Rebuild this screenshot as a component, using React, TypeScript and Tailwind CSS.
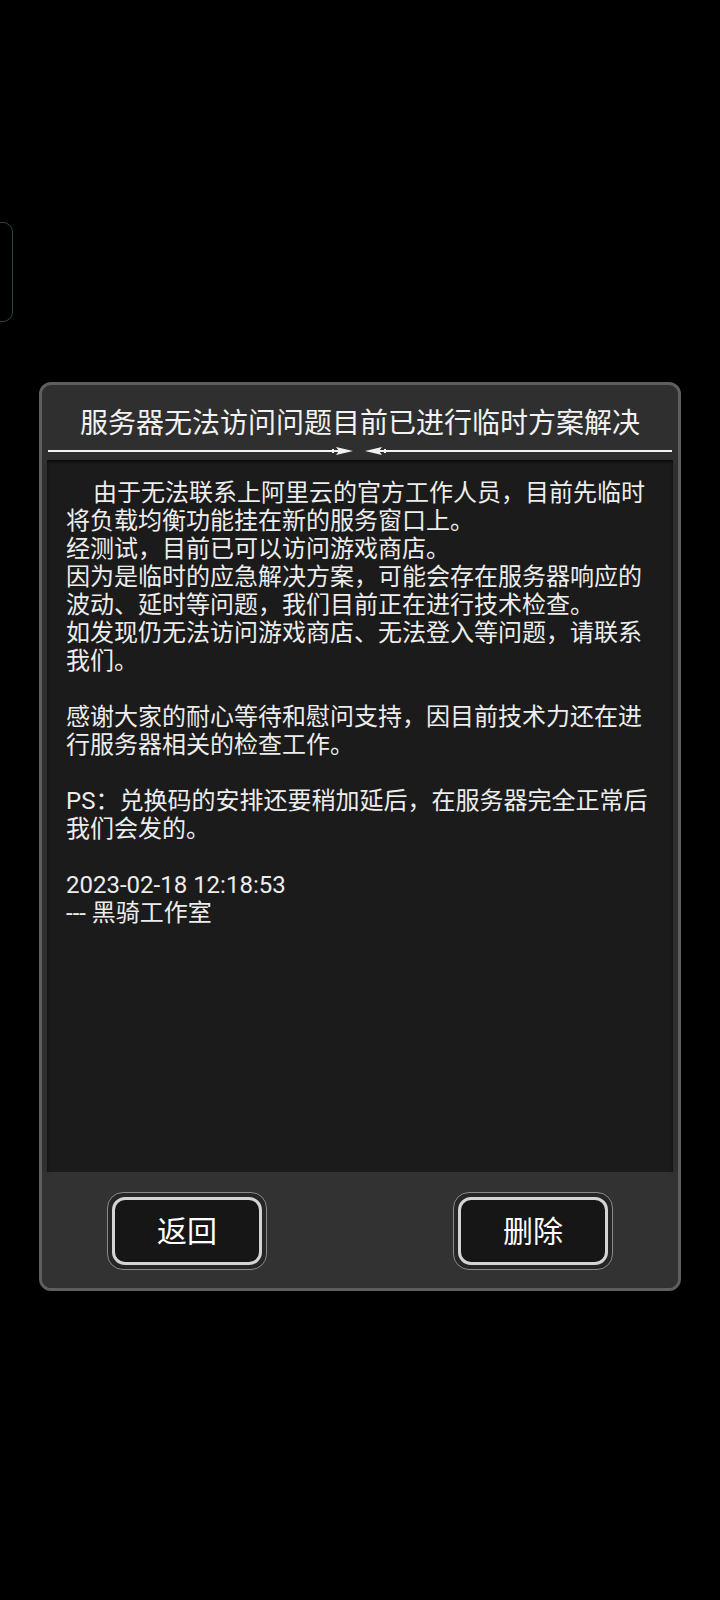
import React from 'react'

const lines: string[] = [
  '将负载均衡功能挂在新的服务窗口上。',
  '经测试，目前已可以访问游戏商店。',
  '因为是临时的应急解决方案，可能会存在服务器响应的',
  '波动、延时等问题，我们目前正在进行技术检查。',
  '如发现仍无法访问游戏商店、无法登入等问题，请联系',
  '我们。',
  '',
  '感谢大家的耐心等待和慰问支持，因目前技术力还在进',
  '行服务器相关的检查工作。',
  '',
  'PS：兑换码的安排还要稍加延后，在服务器完全正常后',
  '我们会发的。',
  '',
  '2023-02-18 12:18:53',
  '--- 黑骑工作室',
]

const font = { fontFamily: 'Roboto, "Noto Sans CJK SC", sans-serif' }

// divider under the title: two lines with arrowheads meeting in the middle
const Divider = () => (
  <svg width="624" height="12" viewBox="0 0 624 12" className="block">
    <rect x="0" y="5" width="294" height="2" fill="#f2f2f2" />
    <path d="M288 2 L305 6 L288 10 L291 6 Z" fill="#f2f2f2" />
    <rect x="284" y="4" width="2" height="4" fill="#f2f2f2" />
    <path d="M334 2 L317 6 L334 10 L331 6 Z" fill="#f2f2f2" />
    <rect x="336" y="4" width="2" height="4" fill="#f2f2f2" />
    <rect x="330" y="5" width="294" height="2" fill="#f2f2f2" />
  </svg>
)

const DialogButton = ({ label }: { label: string }) => (
  <button className="w-[160px] h-[78px] rounded-[16px] border border-[#8a8a8a] bg-[#262626] p-[4px]">
    <div className="w-full h-full rounded-[13px] border-[3px] border-[#d4d4d4] bg-[#161616] flex items-center justify-center text-[30px] text-white leading-none pt-[2px]">
      {label}
    </div>
  </button>
)

export default function App() {
  return (
    <div className="relative w-[720px] h-[1600px] bg-black overflow-hidden" style={font}>
      {/* side tab peeking from the left edge */}
      <div className="absolute left-[-30px] top-[222px] w-[43px] h-[100px] rounded-[10px] border border-[#2e4a32]" />

      <div className="pt-[382px] px-[39px]">
        <div className="h-[909px] rounded-[12px] border-[3px] border-[#5e5e5e] bg-[#2f2f2f] flex flex-col overflow-hidden">
          <div className="pt-[21px] flex flex-col items-center">
            <div className="text-[28px] leading-[36px] text-[#f2f2f2] whitespace-nowrap">
              服务器无法访问问题目前已进行临时方案解决
            </div>
            <div className="mt-[3px] mb-[3px]">
              <Divider />
            </div>
          </div>

          <div className="mx-[5px] h-[712px] bg-[#1b1b1b] pt-[19px] pl-[19px] text-[24px] leading-[28px] text-[#ededed] shadow-[inset_0_2px_3px_rgba(0,0,0,0.6)]">
            <div className="pl-[27px] whitespace-nowrap">由于无法联系上阿里云的官方工作人员，目前先临时</div>
            {lines.map((l, i) => (
              <div key={i} className="whitespace-nowrap h-[28px]">
                {l}
              </div>
            ))}
          </div>

          <div className="flex-1 flex justify-center gap-[186px] pt-[20px] bg-[#323232]">
            <DialogButton label="返回" />
            <DialogButton label="删除" />
          </div>
        </div>
      </div>
    </div>
  )
}
